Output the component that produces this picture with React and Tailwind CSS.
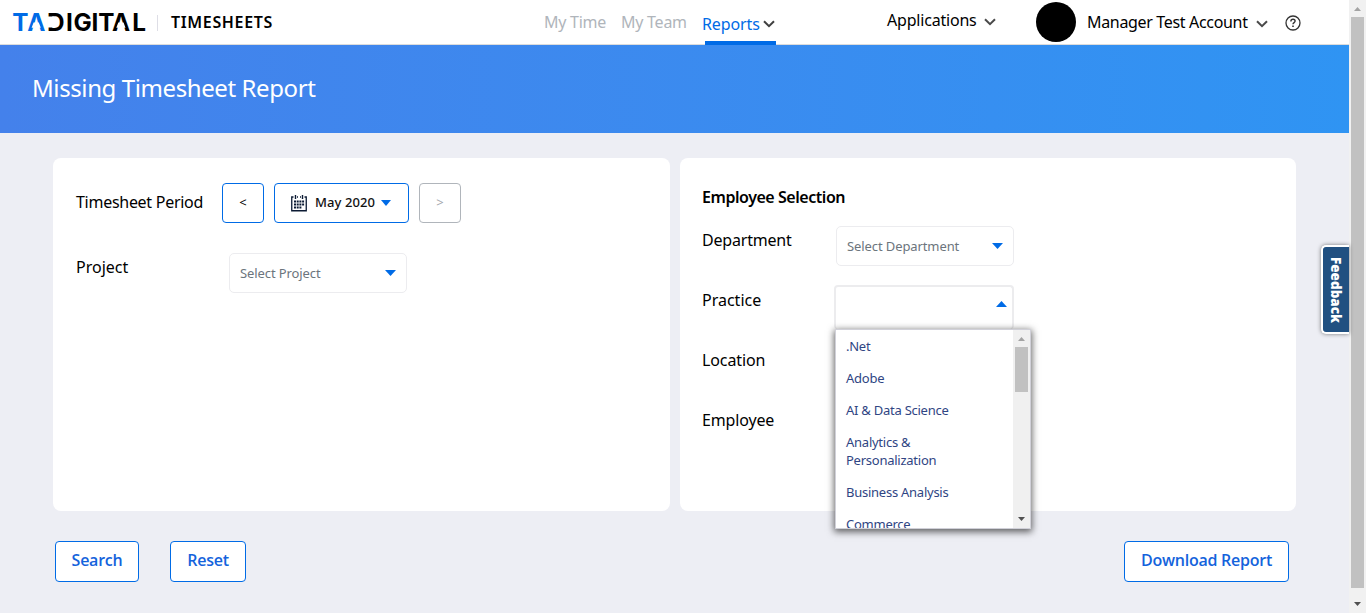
import React from 'react';

const PRACTICES = ['.Net', 'Adobe', 'AI & Data Science', 'Analytics & Personalization', 'Business Analysis', 'Commerce'];

function Triangle({ className = '', up = false }) {
  return (
    <svg className={className} viewBox="0 0 12 6" preserveAspectRatio="none" aria-hidden="true">
      <path d={up ? 'M0 6 6 0l6 6z' : 'M0 0h12L6 6z'} fill="currentColor" />
    </svg>
  );
}

function Chevron({ className = '' }) {
  return (
    <svg className={className} width="12" height="8" viewBox="0 0 12 8" fill="none" aria-hidden="true">
      <path d="M1 1.2 6 6.2l5-5" stroke="currentColor" strokeWidth="2" />
    </svg>
  );
}

function Logo() {
  return (
    <svg className="ml-3 mt-1 shrink-0 overflow-visible" width="136" height="36" viewBox="0 -6 136 36" role="img" aria-label="TA Digital">
      <g fontFamily="Inter, sans-serif" fontSize="24.3" fontWeight="700">
        <text y="20.9" x="0.2 15.2" fill="#006be6">TA</text>
        <text y="20.9" x="35 54.1 61.5 79.5 86.3 99.9 120.2" fill="#000">DIGITAL</text>
      </g>
      <path d="M36 6.6h5.500v11h-5.500zM21.600 12.500h5.200l2 5.200h-9.200zM106.300 12.500h5.200l2 5.200h-9.200z" fill="#fff" />
    </svg>
  );
}

function CalendarIcon() {
  return (
    <svg className="ml-4 shrink-0" width="16" height="17" viewBox="0 0 16 17" fill="none" aria-hidden="true">
      <path d="M2.500 2H.75v13.75h14.5V2H13.500M6 2h1M9 2h1" stroke="#0b1a33" strokeWidth="1.3" />
      <path d="M4.500 0v4M11.500 0v4" stroke="#0b1a33" strokeWidth="1.4" />
      <path d="M3 6.500h10.500M3 9.500h10.500M3 12.500h7.500" stroke="#0b1a33" strokeWidth="2" strokeDasharray="2 .7" />
    </svg>
  );
}

function Select({ label }) {
  return (
    <div className="flex h-10 w-[178px] items-center justify-between rounded-[5px] border border-[#ececef] bg-white pr-[10px] pl-[10px] text-[13px] tracking-[-0.1px] text-[#6c757d]">
      <span className="whitespace-nowrap pt-0.5">{label}</span>
      <Triangle className="h-[6px] w-[11px] text-[#006be6]" />
    </div>
  );
}

function ActionButton({ children, className = '' }) {
  return (
    <button className={`flex h-[41px] items-center justify-center whitespace-nowrap rounded-[4px] border border-[#006be6] bg-white pb-[3px] text-base font-semibold tracking-[-0.25px] text-[#1463dc] ${className}`}>
      {children}
    </button>
  );
}

function Header() {
  return (
    <header className="flex h-[45px] border-b border-[#dcdcdc] bg-white text-base leading-6">
      <Logo />
      <div className="mt-[15px] ml-[9px] h-4 w-px bg-[#dedee6]" />
      <span className="mt-[10px] ml-[13px] w-[104px] whitespace-nowrap font-semibold tracking-[0.65px]">TIMESHEETS</span>
      <nav className="ml-[269px] flex text-[#b0b5bb]">
        <span className="mt-[10px] w-[77px] whitespace-nowrap tracking-[-0.25px]">My Time</span>
        <span className="mt-[10px] w-[81px] whitespace-nowrap tracking-[-0.25px]">My Team</span>
        <div className="flex h-[45px] w-[74px] flex-col justify-between text-[#006be6]">
          <div className="mt-3 flex items-center">
            <span className="w-[61px] whitespace-nowrap tracking-[-0.1px]">Reports</span>
            <Chevron className="shrink-0 text-[#404040]" />
          </div>
          <div className="ml-[3px] h-1 w-[71px] bg-[#006be6]" />
        </div>
      </nav>
      <div className="mt-2 ml-[111px] flex h-6 w-[149px] items-center">
        <span className="w-[97px] whitespace-nowrap tracking-[-0.2px]">Applications</span>
        <Chevron className="mt-1 text-[#4a4a4a]" />
      </div>
      <div className="mt-0.5 h-10 w-10 shrink-0 rounded-full bg-black" />
      <div className="mt-[10px] ml-[11px] flex h-6 items-center">
        <span className="w-[169px] whitespace-nowrap tracking-[-0.33px]">Manager Test Account</span>
        <Chevron className="mt-1 text-[#4a4a4a]" />
      </div>
      <svg className="mt-[15px] ml-[17px]" width="16" height="16" viewBox="0 0 16 16" fill="none" stroke="#333" aria-hidden="true">
        <circle cx="8" cy="8" r="7" strokeWidth="1.3" />
        <path d="M5.900 6.400c0-3 4.200-2.700 4.200-.3C10.100 7.700 8 7.500 8 9.300" strokeWidth="1.4" />
        <path d="M8 10.500v1.500" strokeWidth="1.6" />
      </svg>
    </header>
  );
}

function PeriodCard() {
  return (
    <section className="h-[353px] w-[617px] rounded-[8px] bg-white pt-[25px] pl-[23px]">
      <div className="flex h-10 items-center">
        <span className="w-[146px] whitespace-nowrap pb-0.5 text-base tracking-[-0.28px]">Timesheet Period</span>
        <button className="h-10 w-[42px] rounded-[4px] border border-[#006be6] text-[13px]">&lt;</button>
        <button className="ml-[10px] flex h-10 w-[135px] items-center rounded-[4px] border border-[#006be6] text-[13px] font-medium text-[#111]">
          <CalendarIcon />
          <span className="ml-2 w-[63px] whitespace-nowrap text-left tracking-[0.1px]">May 2020</span>
          <Triangle className="ml-[3px] h-[6px] w-[10px] text-[#006be6]" />
        </button>
        <button className="ml-[10px] h-10 w-[42px] rounded-[4px] border border-[#b0b5bb] text-[13px] text-[#a4a8ad]">&gt;</button>
      </div>
      <div className="mt-[30px] flex">
        <span className="mt-[2px] w-[153px] text-base leading-6">Project</span>
        <Select label="Select Project" />
      </div>
    </section>
  );
}

function PracticeMenu() {
  return (
    <div className="absolute top-[42px] -left-px z-10 flex h-[200px] w-[196px] border border-[#d0d0d8] bg-white shadow-[0_2px_7px_1px_rgba(0,0,0,0.6)]">
      <ul className="flex-1 overflow-hidden text-[13px] leading-[18px] tracking-[-0.25px] text-[#2f4583]">
        {PRACTICES.map((name) => (
          <li key={name} className="py-[7px] pr-10 pl-[10px]">{name}</li>
        ))}
      </ul>
      <div className="flex w-[17px] flex-col items-center bg-[#f0f0f0]">
        <Triangle up className="mt-[7px] h-1 w-[7px] text-[#a3a3a3]" />
        <div className="mt-[6px] h-[45px] w-[13px] bg-[#c1c1c1]" />
        <Triangle className="mt-auto mb-[7px] h-1 w-[7px] text-[#505050]" />
      </div>
    </div>
  );
}

function EmployeeCard() {
  return (
    <section className="h-[353px] w-[616px] rounded-[8px] bg-white pt-[27px] pl-[22px] text-base">
      <h2 className="font-semibold leading-6 tracking-[-0.45px]">Employee Selection</h2>
      <div className="mt-[17px] flex h-[60px] tracking-[-0.2px]">
        <span className="mt-[2px] w-[134px] leading-6">Department</span>
        <Select label="Select Department" />
      </div>
      <div className="flex h-[60px]">
        <span className="mt-[2px] w-[132px] leading-6">Practice</span>
        <div className="relative -mt-px h-[44px] w-[180px] rounded-[4px] border-2 border-b-0 border-[#ececee] bg-white">
          <Triangle up className="mt-[14px] ml-[160px] h-[6px] w-[11px] text-[#006be6]" />
          <PracticeMenu />
        </div>
      </div>
      <div className="h-[60px] pt-[2px] leading-6 tracking-[-0.1px]">Location</div>
      <div className="pt-[2px] leading-6 tracking-[-0.15px]">Employee</div>
    </section>
  );
}

function FeedbackTab() {
  return (
    <div className="absolute top-[245px] right-[17px] flex h-[89px] w-[28px] items-center justify-center rounded-l-[5px] border-2 border-r-0 border-white bg-[#205081] shadow-[0_0_4px_rgba(0,0,0,0.5)]">
      <span className="pr-0.5 font-['Open_Sans'] text-[13.5px] font-extrabold leading-none text-white [writing-mode:vertical-rl]">Feedback</span>
    </div>
  );
}

export default function App() {
  return (
    <div className="relative flex h-[613px] w-[1366px] overflow-hidden bg-[#edeef4] font-['Noto_Sans',sans-serif] text-black">
      <div className="w-[1349px] shrink-0">
        <Header />
        <div className="flex h-[88px] items-center bg-linear-to-r from-[#4481eb] to-[#2f94f3] pl-8">
          <h1 className="whitespace-nowrap pb-0.5 text-2xl tracking-[-0.4px] text-white">Missing Timesheet Report</h1>
        </div>
        <main>
          <div className="flex gap-[10px] pt-[25px] pl-[53px]">
            <PeriodCard />
            <EmployeeCard />
          </div>
          <div className="mt-[30px] flex pl-[55px] font-['Open_Sans',sans-serif]">
            <ActionButton className="w-[84px]">Search</ActionButton>
            <ActionButton className="ml-[31px] w-[76px]">Reset</ActionButton>
            <ActionButton className="ml-auto mr-[60px] w-[165px]">Download Report</ActionButton>
          </div>
        </main>
      </div>
      <div className="flex w-[17px] flex-col items-center bg-[#f1f1f1]">
        <Triangle up className="mt-[7px] h-1 w-[7px] text-[#a3a3a3]" />
        <div className="mt-[6px] h-[571px] w-[13px] bg-[#c1c1c1]" />
        <Triangle className="mt-[14px] h-1 w-[7px] text-[#505050]" />
      </div>
      <FeedbackTab />
    </div>
  );
}
